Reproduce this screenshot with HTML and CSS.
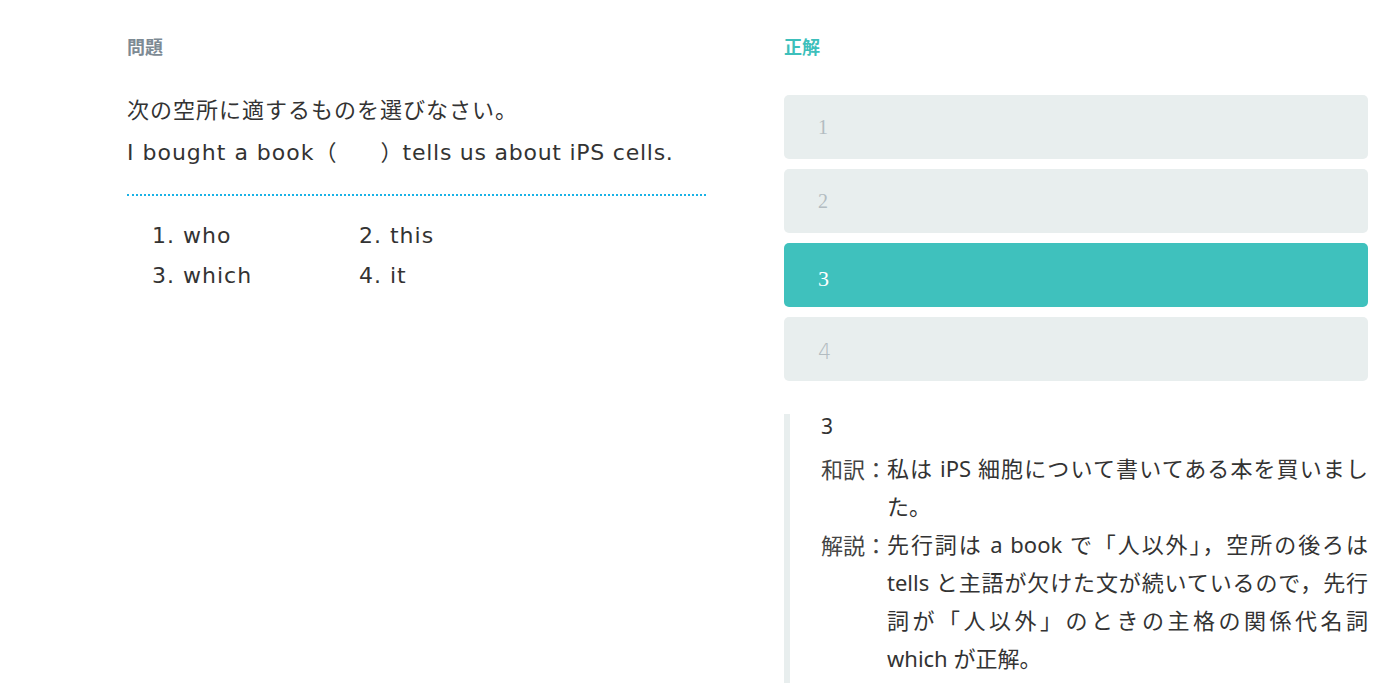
FILE: index.html
```html
<!DOCTYPE html>
<html lang="ja">
<head>
<meta charset="utf-8">
<title>問題と正解</title>
<link rel="stylesheet" href="styles.css">
</head>
<body>
<div class="page">
  <section class="col col-q">
    <h2 class="label label-q">問題</h2>
    <div class="question">
      <p class="q-line">次の空所に適するものを選びなさい。</p>
      <p class="q-line">I bought a book<span class="blank">（　　）</span><span class="tail">tells us about iPS cells.</span></p>
    </div>
    <div class="choices">
      <span>1. who</span>
      <span>2. this</span>
      <span>3. which</span>
      <span>4. it</span>
    </div>
  </section>
  <section class="col col-a">
    <h2 class="label label-a">正解</h2>
    <ul class="options">
      <li class="opt">1</li>
      <li class="opt">2</li>
      <li class="opt opt-selected">3</li>
      <li class="opt opt-sans">4</li>
    </ul>
    <div class="explain">
      <div class="ans">3</div>
      <div class="row">
        <span class="row-label">和訳：</span>
        <div class="row-text">
          <span class="jl">私は iPS 細胞について書いてある本を買いまし</span>
          <span class="ll">た。</span>
        </div>
      </div>
      <div class="row">
        <span class="row-label">解説：</span>
        <div class="row-text">
          <span class="jl">先行詞は a book で「人以外」，空所の後ろは</span>
          <span class="jl">tells と主語が欠けた文が続いているので，先行</span>
          <span class="jl">詞が「人以外」のときの主格の関係代名詞</span>
          <span class="ll">which が正解。</span>
        </div>
      </div>
    </div>
  </section>
</div>
</body>
</html>
```

FILE: styles.css
```css
* { box-sizing: border-box; }
html, body { margin: 0; padding: 0; background: #ffffff; }
body {
  font-family: "Noto Sans", "Noto Sans CJK JP", sans-serif;
  color: #333333;
  height: 697px;
  overflow: hidden;
}
.page {
  display: flex;
  padding-top: 36px;
  padding-left: 127px;
  gap: 78px;
}
.col-q { width: 579px; flex: none; }
.col-a { width: 584px; flex: none; }
.label {
  margin: 0;
  font-family: "Noto Sans CJK JP", sans-serif;
  font-size: 18px;
  line-height: 20px;
  font-weight: 700;
}
.label-q { color: #7d8a94; margin-bottom: 34px; }
.label-a { color: #3dbfbb; margin-bottom: 39px; }

.question {
  font-family: "DejaVu Sans", "Noto Sans CJK JP", sans-serif;
  font-size: 22px;
  letter-spacing: 1px;
  color: #333333;
  padding-bottom: 20px;
  border-bottom: 2px dotted #1ab2e6;
}
.q-line { margin: 0; line-height: 42px; white-space: nowrap; }
.blank { letter-spacing: 0; }
.tail { letter-spacing: 0.75px; }

.choices {
  display: grid;
  grid-template-columns: 207px 207px;
  padding-top: 20px;
  padding-left: 25px;
  font-family: "DejaVu Sans", sans-serif;
  font-size: 22px;
  letter-spacing: 1px;
  line-height: 40px;
  color: #333333;
}

.options { list-style: none; margin: 0; padding: 0; display: flex; flex-direction: column; gap: 10px; }
.opt {
  height: 64px;
  display: flex;
  align-items: center;
  padding-left: 34px;
  background: #e8eeee;
  border-radius: 5px;
  font-family: "Liberation Serif", serif;
  font-size: 20px;
  color: #b3bcc1;
}
.opt-selected { background: #3fc1bd; color: #ffffff; font-size: 22px; padding-top: 7px; }
.opt-sans { font-family: "DejaVu Sans", sans-serif; font-weight: 200; font-size: 21px; padding-top: 5px; }

.explain {
  margin-top: 33px;
  border-left: 6px solid #e8eeee;
  padding-left: 31px;
  padding-bottom: 6px;
  font-size: 22px;
  color: #333333;
}
.ans { line-height: 24px; margin-bottom: 11px; font-size: 21px; }
.row { display: flex; line-height: 38px; }
.row-label { width: 66px; flex: none; font-family: "Noto Sans CJK JP", sans-serif; color: #444; }
.row-text { flex: 1; }
.jl { display: block; text-align: justify; text-align-last: justify; white-space: nowrap; }
.ll { display: block; white-space: nowrap; }
```
